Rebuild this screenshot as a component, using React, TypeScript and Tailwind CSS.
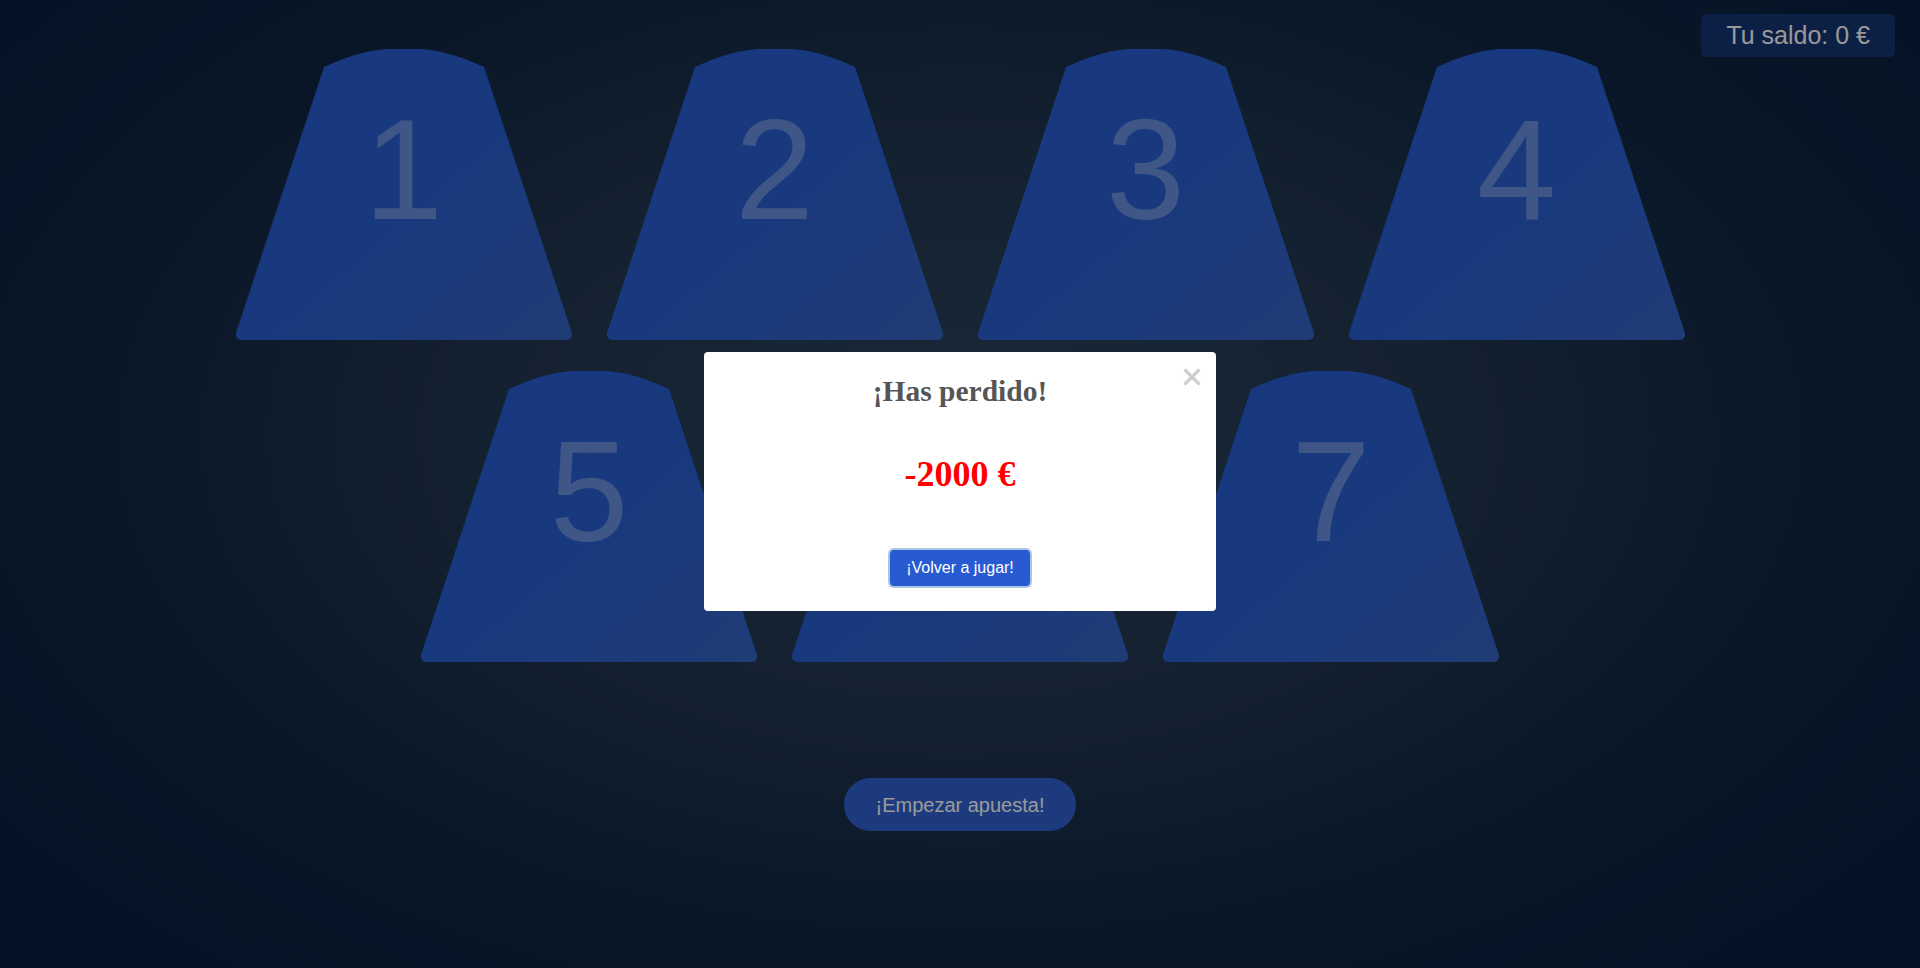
import React from "react";

const cups = [1, 2, 3, 4, 5, 6, 7];

const Cup = ({ n }: { n: number }) => {
  const gradId = `cupGrad${n}`;
  return (
    <div className="relative w-[336px] h-[291px]">
      <svg className="absolute inset-0 overflow-visible" width="336" height="291" viewBox="0 0 336 291">
        <defs>
          <linearGradient id={gradId} x1="0" y1="0" x2="1" y2="1">
            <stop offset="0" stopColor="#265cd6" />
            <stop offset="0.55" stopColor="#2b60d2" />
            <stop offset="1" stopColor="#3564c4" />
          </linearGradient>
        </defs>
        <path
          d="M88 18 C110 8 128 2 150 0 L186 0 C208 2 226 8 248 18 L336 284 Q337 291 329 291 L7 291 Q-1 291 0 284 Z"
          fill={`url(#${gradId})`}
        />
      </svg>
      <div className="relative flex justify-center pt-[50px] text-[142px] leading-none text-white/30 select-none">
        {n}
      </div>
    </div>
  );
};

export default function App() {
  return (
    <div className="relative h-[968px] overflow-hidden font-['Liberation_Sans',Arial,sans-serif] bg-[radial-gradient(ellipse_60%_70%_at_50%_45%,#2d4460_0%,#213650_45%,#0f2644_75%,#08213f_100%)]">
      {/* balance */}
      <div className="absolute top-[14px] right-[25px] h-[43px] px-[25px] flex items-center rounded-[5px] bg-[#143473] text-white text-[25px]">
        Tu saldo: 0 €
      </div>

      {/* board */}
      <div className="flex flex-col items-center pt-[49px]">
        <div className="w-[1450px] flex flex-wrap justify-center gap-x-[35px] gap-y-[31px]">
          {cups.map((n) => (
            <Cup key={n} n={n} />
          ))}
        </div>
        <button className="mt-[116px] w-[232px] h-[53px] rounded-full bg-[#2f62d0] text-white text-[20px]">
          ¡Empezar apuesta!
        </button>
      </div>

      {/* result modal */}
      <div className="fixed inset-0 bg-black/40 flex items-start justify-center pt-[352px]">
        <div className="relative w-[512px] bg-white rounded-[4px] pt-[25px] pb-[25px] flex flex-col items-center">
          <button className="absolute top-[16px] right-[15px] w-[18px] h-[18px]">
            <svg width="18" height="18" viewBox="0 0 18 18">
              <path d="M1.5 1.5 L16.5 16.5 M16.5 1.5 L1.5 16.5" stroke="#cfcfcf" strokeWidth="3.2" />
            </svg>
          </button>
          <h1 className="font-['Liberation_Serif','Times_New_Roman',serif] font-bold text-[29.5px] leading-none text-[#555555]">
            ¡Has perdido!
          </h1>
          <p className="mt-[49px] font-['Liberation_Serif','Times_New_Roman',serif] font-bold text-[36px] leading-none text-[#ff0000]">
            -2000 €
          </p>
          <button className="mt-[58px] h-[36px] px-[16px] rounded-[4px] bg-[#285ad1] ring-2 ring-[#a9c4e4] text-white text-[16px]">
            ¡Volver a jugar!
          </button>
        </div>
      </div>
    </div>
  );
}
